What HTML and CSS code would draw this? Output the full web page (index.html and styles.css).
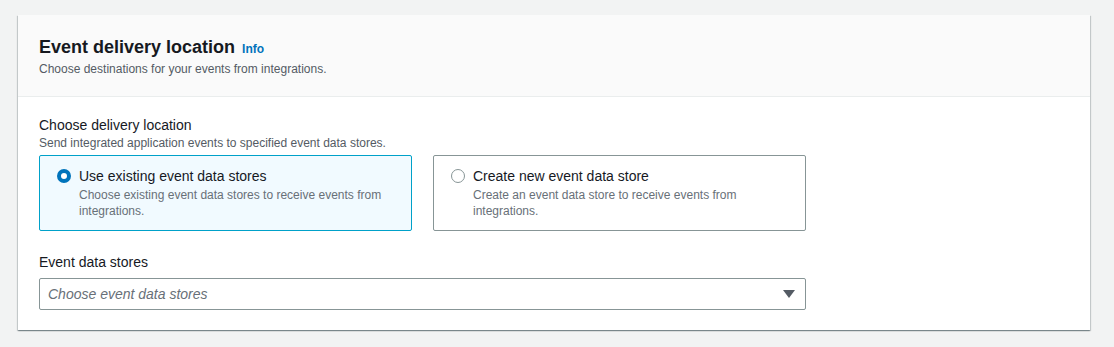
FILE: index.html
```html
<!DOCTYPE html>
<html lang="en">
<head>
    <meta charset="UTF-8">
    <title>Event delivery location</title>
    <link rel="stylesheet" href="styles.css">
</head>
<body>
    <div class="container">
        <div class="card-header">
            <h2 class="title">Event delivery location <a class="info" href="#">Info</a></h2>
            <p class="desc">Choose destinations for your events from integrations.</p>
        </div>

        <div class="card-body">
            <div class="field">
                <div class="label">Choose delivery location</div>
                <div class="hint">Send integrated application events to specified event data stores.</div>
                <div class="tiles">
                    <div class="tile selected">
                        <span class="radio checked"></span>
                        <div class="tile-text">
                            <div class="tile-title">Use existing event data stores</div>
                            <div class="tile-desc">Choose existing event data stores to receive events from integrations.</div>
                        </div>
                    </div>
                    <div class="tile">
                        <span class="radio"></span>
                        <div class="tile-text">
                            <div class="tile-title">Create new event data store</div>
                            <div class="tile-desc">Create an event data store to receive events from integrations.</div>
                        </div>
                    </div>
                </div>
            </div>

            <div class="field second">
                <div class="label">Event data stores</div>
                <div class="select">
                    <span class="placeholder">Choose event data stores</span>
                    <svg class="caret" width="12" height="8" viewBox="0 0 12 8"><path d="M0 0 H12 L6 8 Z" fill="#545b64"/></svg>
                </div>
            </div>
        </div>
    </div>
</body>
</html>
```

FILE: styles.css
```css
body {
    margin: 0;
    padding: 15px 24px 17px 18px;
    background-color: #f2f3f3;
    font-family: "Liberation Sans", Arial, sans-serif;
    color: #16191f;
}

.container {
    background-color: #fff;
    box-shadow: 0 1px 1px 0 rgba(0, 28, 36, 0.3), 1px 1px 1px 0 rgba(0, 28, 36, 0.15), -1px 1px 1px 0 rgba(0, 28, 36, 0.15);
}

.card-header {
    background-color: #fafafa;
    border-bottom: 1px solid #eaeded;
    padding: 21px 21px 19px;
}

.title {
    margin: 0;
    font-size: 18px;
    line-height: 22px;
    font-weight: bold;
}

.info {
    margin-left: 2px;
    font-size: 12px;
    color: #0073bb;
    text-decoration: none;
    font-weight: bold;
}

.desc {
    margin: 1px 0 0;
    font-size: 12px;
    line-height: 16px;
    color: #545b64;
}

.card-body {
    padding: 18px 21px 20px;
}

.label {
    font-size: 14px;
    line-height: 20px;
}

.hint {
    font-size: 12px;
    line-height: 16px;
    color: #545b64;
    margin-bottom: 4px;
}

.tiles {
    display: grid;
    grid-template-columns: 373px 373px;
    gap: 21px;
}

.tile {
    display: flex;
    gap: 8px;
    padding: 10px 16px 11px 17px;
    border: 1px solid #879596;
    border-radius: 2px;
}

.tile.selected {
    background-color: #f1faff;
    border-color: #00a1c9;
}

.radio {
    flex: none;
    width: 14px;
    height: 14px;
    margin-top: 3px;
    box-sizing: border-box;
    border: 1px solid #879596;
    border-radius: 50%;
    background: #fff;
}

.radio.checked {
    border: 4px solid #0073bb;
}

.tile-title {
    font-size: 14px;
    line-height: 20px;
}

.tile-desc {
    margin-top: 1px;
    font-size: 12px;
    line-height: 16px;
    color: #687078;
}

.second {
    margin-top: 21px;
}

.select {
    margin-top: 6px;
    width: 767px;
    height: 32px;
    box-sizing: border-box;
    border: 1px solid #879596;
    border-radius: 2px;
    display: flex;
    align-items: center;
    justify-content: space-between;
    padding: 0 10px 0 8px;
}

.placeholder {
    font-size: 14px;
    font-style: italic;
    color: #687078;
}
```
